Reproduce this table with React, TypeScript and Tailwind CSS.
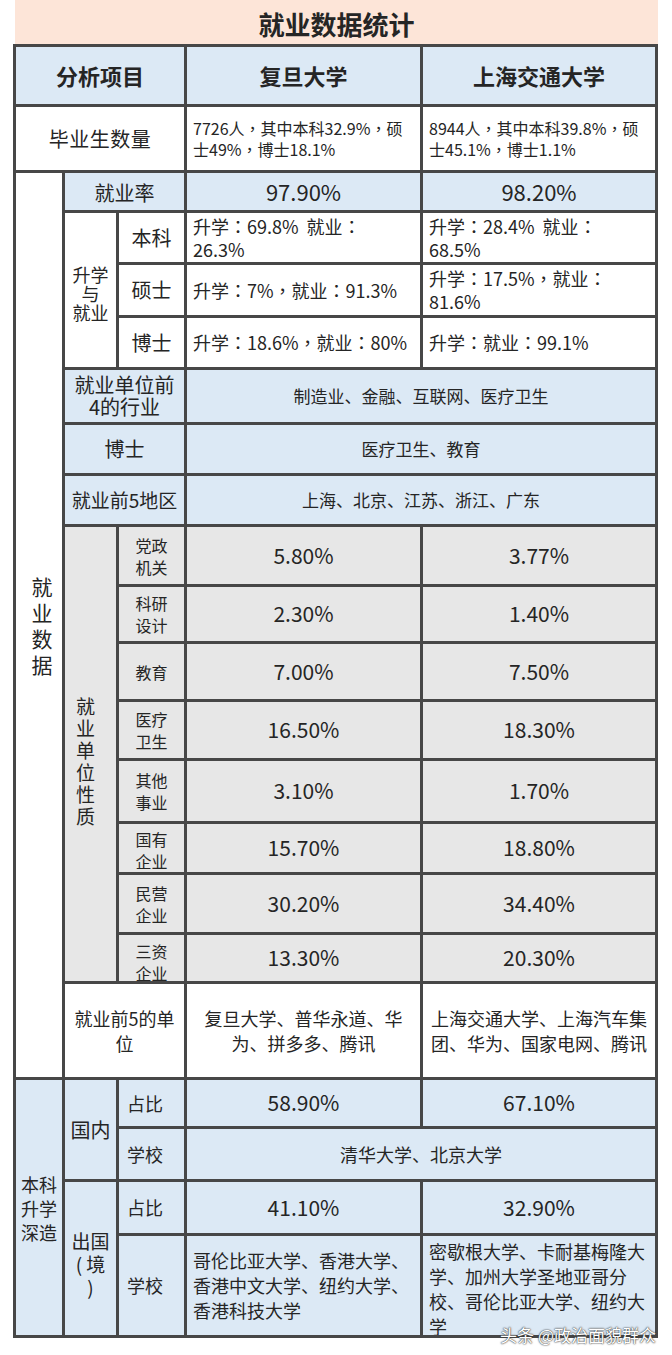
import type { ReactNode } from "react";

const BLUE = "bg-[#dce9f5]";
const GREY = "bg-[#e7e7e7]";

// 全角逗号、冒号用繁体字形，使其居中
function punct(s: string): ReactNode[] {
  return s.split(/([，：])/).map((part, i) =>
    part === "，" || part === "：" ? (
      <span key={i} className="font-['Noto_Sans_CJK_TC',sans-serif]">
        {part}
      </span>
    ) : (
      part
    )
  );
}

function Lines({ lines }: { lines: string[] }) {
  return (
    <>
      {lines.map((l, i) => (
        <span key={i} className="block whitespace-pre">
          {punct(l)}
        </span>
      ))}
    </>
  );
}

function C({ className = "", children }: { className?: string; children?: ReactNode }) {
  return (
    <div className={`flex items-center justify-center text-center overflow-hidden ${className}`}>
      <div>{children}</div>
    </div>
  );
}

function L({ className = "", children }: { className?: string; children?: ReactNode }) {
  return (
    <div className={`flex items-center justify-start text-left pl-[6px] overflow-hidden ${className}`}>
      <div>{children}</div>
    </div>
  );
}

const natureRows = [
  { label: ["党政", "机关"], a: "5.80%", b: "3.77%", row: "row-[10]", pad: "" },
  { label: ["科研", "设计"], a: "2.30%", b: "1.40%", row: "row-[11]", pad: "" },
  { label: ["教育"], a: "7.00%", b: "7.50%", row: "row-[12]", pad: "" },
  { label: ["医疗", "卫生"], a: "16.50%", b: "18.30%", row: "row-[13]", pad: "" },
  { label: ["其他", "事业"], a: "3.10%", b: "1.70%", row: "row-[14]", pad: "" },
  { label: ["国有", "企业"], a: "15.70%", b: "18.80%", row: "row-[15]", pad: "pt-[4px]" },
  { label: ["民营", "企业"], a: "30.20%", b: "34.40%", row: "row-[16]", pad: "" },
  { label: ["三资", "企业"], a: "13.30%", b: "20.30%", row: "row-[17]", pad: "pt-[8px]" },
];

export default function App() {
  return (
    <div className="relative w-[672px] h-[1355px] bg-white text-[#252525] font-['Noto_Sans_CJK_SC','Noto_Sans',sans-serif]">
      <div className="ml-[15px] w-[643px] h-[44px] bg-[#fde5d8] flex items-center justify-center pt-[2px] text-[26px] font-bold">
        就业数据统计
      </div>

      <div className="ml-[13px] w-[645px] grid grid-cols-[46px_51px_65px_233px_232px] grid-rows-[57px_63px_37px_49px_50px_49px_52px_48px_48px_57px_54px_55px_56px_60px_48px_57px_46px_93px_46px_50px_51px_99px] gap-[3px] border-[3px] border-[#474747] bg-[#474747]">
        {/* 表头 */}
        <C className={`col-[1/4] row-[1] ${BLUE} text-[22px] font-bold`}>分析项目</C>
        <C className={`col-[4] row-[1] ${BLUE} text-[22px] font-bold`}>复旦大学</C>
        <C className={`col-[5] row-[1] ${BLUE} text-[22px] font-bold`}>上海交通大学</C>

        {/* 毕业生数量 */}
        <C className="col-[1/4] row-[2] bg-white text-[20px] tracking-[0.5px]">毕业生数量</C>
        <L className="col-[4] row-[2] bg-white text-[16px] leading-[21px]">
          <Lines lines={["7726人，其中本科32.9%，硕", "士49%，博士18.1%"]} />
        </L>
        <L className="col-[5] row-[2] bg-white text-[16px] leading-[21px]">
          <Lines lines={["8944人，其中本科39.8%，硕", "士45.1%，博士1.1%"]} />
        </L>

        {/* 就业数据 */}
        <C className="col-[1] row-[3/19] bg-white text-[21px] leading-[26px] pl-[6px]">
          <Lines lines={["就", "业", "数", "据"]} />
        </C>

        <C className={`col-[2/4] row-[3] ${BLUE} text-[20px] pt-[3px]`}>就业率</C>
        <C className={`col-[4] row-[3] ${BLUE} text-[22px]`}>97.90%</C>
        <C className={`col-[5] row-[3] ${BLUE} text-[22px]`}>98.20%</C>

        <C className="col-[2] row-[4/7] bg-white text-[18px] leading-[19px] pt-[6px]">
          <Lines lines={["升学", "与", "就业"]} />
        </C>
        <C className="col-[3] row-[4] bg-white text-[20px]">本科</C>
        <C className="col-[3] row-[5] bg-white text-[20px]">硕士</C>
        <C className="col-[3] row-[6] bg-white text-[20px]">博士</C>

        <L className="col-[4] row-[4] bg-white text-[18px] leading-[23px]">
          <Lines lines={["升学：69.8%  就业：", "26.3%"]} />
        </L>
        <L className="col-[5] row-[4] bg-white text-[18px] leading-[23px]">
          <Lines lines={["升学：28.4%  就业：", "68.5%"]} />
        </L>
        <L className="col-[4] row-[5] bg-white text-[18px] leading-[23px]">
          <Lines lines={["升学：7%，就业：91.3%"]} />
        </L>
        <L className="col-[5] row-[5] bg-white text-[18px] leading-[23px]">
          <Lines lines={["升学：17.5%，就业：", "81.6%"]} />
        </L>
        <L className="col-[4] row-[6] bg-white text-[18px] leading-[23px]">
          <Lines lines={["升学：18.6%，就业：80%"]} />
        </L>
        <L className="col-[5] row-[6] bg-white text-[18px] leading-[23px]">
          <Lines lines={["升学：就业：99.1%"]} />
        </L>

        <C className={`col-[2/4] row-[7] ${BLUE} text-[20px] leading-[22px]`}>
          <Lines lines={["就业单位前", "4的行业"]} />
        </C>
        <C className={`col-[4/6] row-[7] ${BLUE} text-[17px]`}>制造业、金融、互联网、医疗卫生</C>

        <C className={`col-[2/4] row-[8] ${BLUE} text-[20px]`}>博士</C>
        <C className={`col-[4/6] row-[8] ${BLUE} text-[17px]`}>医疗卫生、教育</C>

        <C className={`col-[2/4] row-[9] ${BLUE} text-[19px] whitespace-nowrap`}>就业前5地区</C>
        <C className={`col-[4/6] row-[9] ${BLUE} text-[17px]`}>上海、北京、江苏、浙江、广东</C>

        {/* 就业单位性质 */}
        <C className={`col-[2] row-[10/18] ${GREY} text-[19px] leading-[22px] pr-[10px] pt-[14px]`}>
          <Lines lines={["就", "业", "单", "位", "性", "质"]} />
        </C>
        {natureRows.map((r) => (
          <div key={r.a} className="contents">
            <C className={`col-[3] ${r.row} ${GREY} text-[16px] leading-[22px] ${r.pad}`}>
              <Lines lines={r.label} />
            </C>
            <C className={`col-[4] ${r.row} ${GREY} text-[21px]`}>{r.a}</C>
            <C className={`col-[5] ${r.row} ${GREY} text-[21px]`}>{r.b}</C>
          </div>
        ))}

        <C className="col-[2/4] row-[18] bg-white text-[18px] leading-[25px]">
          <Lines lines={["就业前5的单", "位"]} />
        </C>
        <C className="col-[4] row-[18] bg-white text-[18px] leading-[25px]">
          <Lines lines={["复旦大学、普华永道、华", "为、拼多多、腾讯"]} />
        </C>
        <C className="col-[5] row-[18] bg-white text-[18px] leading-[25px]">
          <Lines lines={["上海交通大学、上海汽车集", "团、华为、国家电网、腾讯"]} />
        </C>

        {/* 本科升学深造 */}
        <C className={`col-[1] row-[19/23] ${BLUE} text-[18px] leading-[24px]`}>
          <Lines lines={["本科", "升学", "深造"]} />
        </C>
        <C className={`col-[2] row-[19/21] ${BLUE} text-[20px]`}>国内</C>
        <C className={`col-[2] row-[21/23] ${BLUE} text-[19px] leading-[23px] pt-[10px]`}>
          <Lines lines={["出国", "( 境", ")"]} />
        </C>

        <L className={`col-[3] row-[19] ${BLUE} text-[18px] pl-[8px]`}>占比</L>
        <C className={`col-[4] row-[19] ${BLUE} text-[21px]`}>58.90%</C>
        <C className={`col-[5] row-[19] ${BLUE} text-[21px]`}>67.10%</C>

        <L className={`col-[3] row-[20] ${BLUE} text-[18px] pl-[8px]`}>学校</L>
        <C className={`col-[4/6] row-[20] ${BLUE} text-[18px]`}>清华大学、北京大学</C>

        <L className={`col-[3] row-[21] ${BLUE} text-[18px] pl-[8px]`}>占比</L>
        <C className={`col-[4] row-[21] ${BLUE} text-[21px]`}>41.10%</C>
        <C className={`col-[5] row-[21] ${BLUE} text-[21px]`}>32.90%</C>

        <L className={`col-[3] row-[22] ${BLUE} text-[18px] pl-[8px]`}>学校</L>
        <L className={`col-[4] row-[22] ${BLUE} text-[18px] leading-[25px]`}>
          <Lines lines={["哥伦比亚大学、香港大学、", "香港中文大学、纽约大学、", "香港科技大学"]} />
        </L>
        <div className={`col-[5] row-[22] ${BLUE} text-[18px] leading-[25px] pl-[6px] pt-[3px] overflow-hidden`}>
          <Lines lines={["密歇根大学、卡耐基梅隆大", "学、加州大学圣地亚哥分", "校、哥伦比亚大学、纽约大", "学"]} />
        </div>
      </div>

      <div className="absolute right-[16px] top-[1322px] text-[17px] text-white [text-shadow:0_0_2px_#333,0_0_1px_#333]">
        头条 @政治面貌群众
      </div>
    </div>
  );
}
